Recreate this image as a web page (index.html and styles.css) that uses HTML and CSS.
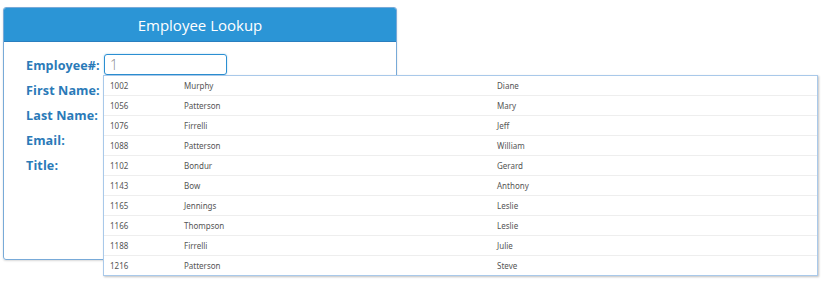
FILE: index.html
```html
<!DOCTYPE html>
<html>
<head>
<meta charset="utf-8">
<link rel="stylesheet" href="styles.css">
</head>
<body>
<div class="panel">
  <div class="panel-head">Employee Lookup</div>
  <div class="panel-body">
    <div class="row">
      <label class="lbl">Employee#:</label>
      <div class="field">
        <div class="input"><span class="val">1</span></div>
        <div class="menu">
          <div class="item"><span class="c1">1002</span><span class="c2">Murphy</span><span class="c3">Diane</span></div>
          <div class="item"><span class="c1">1056</span><span class="c2">Patterson</span><span class="c3">Mary</span></div>
          <div class="item"><span class="c1">1076</span><span class="c2">Firrelli</span><span class="c3">Jeff</span></div>
          <div class="item"><span class="c1">1088</span><span class="c2">Patterson</span><span class="c3">William</span></div>
          <div class="item"><span class="c1">1102</span><span class="c2">Bondur</span><span class="c3">Gerard</span></div>
          <div class="item"><span class="c1">1143</span><span class="c2">Bow</span><span class="c3">Anthony</span></div>
          <div class="item"><span class="c1">1165</span><span class="c2">Jennings</span><span class="c3">Leslie</span></div>
          <div class="item"><span class="c1">1166</span><span class="c2">Thompson</span><span class="c3">Leslie</span></div>
          <div class="item"><span class="c1">1188</span><span class="c2">Firrelli</span><span class="c3">Julie</span></div>
          <div class="item"><span class="c1">1216</span><span class="c2">Patterson</span><span class="c3">Steve</span></div>
        </div>
      </div>
    </div>
    <div class="row"><label class="lbl">First Name:</label></div>
    <div class="row"><label class="lbl">Last Name:</label></div>
    <div class="row"><label class="lbl">Email:</label></div>
    <div class="row"><label class="lbl">Title:</label></div>
  </div>
</div>
</body>
</html>
```

FILE: styles.css
```css
html, body {
  margin: 0;
  padding: 0;
  background: #ffffff;
}
html {
  height: 100%;
}
body {
  min-height: 100%;
  box-sizing: border-box;
  padding: 7px 0 0 3px;
  font-family: "Open Sans", "DejaVu Sans", sans-serif;
}
.panel {
  width: 392px;
  height: 251px;
  border: 1px solid #78aad8;
  border-radius: 3px;
  box-shadow: 0 1px 2px rgba(0,0,0,0.15);
  display: flex;
  flex-direction: column;
}
.panel-head {
  height: 33px;
  background: #2b95d6;
  border-bottom: 1px solid #2a7fbf;
  color: #ffffff;
  font-size: 15px;
  display: flex;
  align-items: center;
  justify-content: center;
  border-radius: 2px 2px 0 0;
}
.panel-body {
  padding: 12px 0 0 22px;
  display: flex;
  flex-direction: column;
}
.row {
  height: 25px;
  display: flex;
  align-items: flex-start;
}
.lbl {
  width: 78px;
  padding-top: 1px;
  color: #2a7ab8;
  font-weight: 700;
  font-size: 12.6px;
  line-height: 21px;
  letter-spacing: 0.1px;
}
.field {
  position: relative;
}
.input {
  width: 116px;
  height: 19px;
  border: 1px solid #2b8fd2;
  border-radius: 3px;
  box-shadow: 0 0 2px rgba(43,143,210,0.4);
  display: flex;
  align-items: center;
  padding-left: 5px;
  box-sizing: content-box;
}
.input .val {
  color: #888;
  font-size: 14px;
  font-weight: 300;
}
.menu {
  position: absolute;
  left: -1px;
  top: 21px;
  width: 713px;
  background: #fff;
  border: 1px solid #a9c9ea;
  box-shadow: 1px 1px 2px rgba(0,0,0,0.25);
  z-index: 2;
}
.item {
  height: 19px;
  border-top: 1px solid #eeeeee;
  display: flex;
  align-items: center;
  font-family: "Noto Sans", "DejaVu Sans", sans-serif;
  font-size: 8px;
  color: #555;
}
.item:first-child {
  border-top: none;
  height: 19px;
}
.c1 {
  width: 74px;
  padding-left: 6px;
}
.c2 {
  width: 313px;
}
```
